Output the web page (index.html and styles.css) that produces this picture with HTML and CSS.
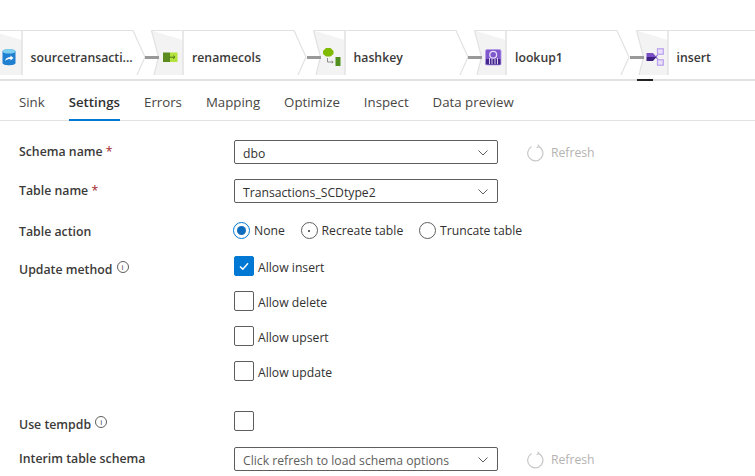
FILE: index.html
```html
<!DOCTYPE html>
<html lang="en">
<head>
    <meta charset="UTF-8">
    <title>Sink settings</title>
    <link rel="stylesheet" href="styles.css">
</head>
<body>

<svg class="defs" width="0" height="0">
    <symbol id="node-shape" viewBox="0 0 161.5 45" overflow="visible">
        <path d="M0.5 0.5 L7.5 27 L3 45 L32 45 L32 0.5 Z" fill="#f3f3f3"/>
        <path d="M0.5 0.5 L143 0.5 L155 27 L147 45" fill="#fff" stroke="#e2e2e2" stroke-width="1.2"/>
        <path d="M0.5 0.5 L7.5 27 L3 45" fill="none" stroke="#e2e2e2" stroke-width="1.2"/>
        <path d="M32 0.5 V45" stroke="#e4e4e4" stroke-width="1.6"/>
    </symbol>
    <symbol id="refresh" viewBox="0 0 18 18">
        <path d="M5.6 2.6 A7.6 7.6 0 1 0 12.6 2.4" fill="none" stroke="#c8c8c8" stroke-width="1.2"/>
        <path d="M11.8 0.8 L12.8 2.6 L10.6 3.8" fill="none" stroke="#c8c8c8" stroke-width="1.2"/>
    </symbol>
    <symbol id="chevron" viewBox="0 0 10 6">
        <path d="M0.5 0.5 L5 5 L9.5 0.5" fill="none" stroke="#605e5c" stroke-width="1"/>
    </symbol>
</svg>

<div class="strip">
    <div class="node">
        <svg class="node-shape"><use href="#node-shape"/></svg>
        <svg class="node-icon" viewBox="0 0 18 18">
            <path d="M2.5 3.5 C2.5 0.5 15.5 0.5 15.5 3.5 V15 C15.5 18 2.5 18 2.5 15 Z" fill="#1f7fd1"/>
            <ellipse cx="9" cy="3.3" rx="6.5" ry="2.3" fill="#7fd0f0"/>
            <path d="M5 13 C5.5 10 8 9 10.5 9 V7.5 L13.5 10 L10.5 12.5 V11 C8.5 11 6.5 11.5 5 13 Z" fill="#fff"/>
        </svg>
        <span class="node-name">sourcetransacti...</span>
    </div>
    <div class="node">
        <svg class="node-shape"><use href="#node-shape"/></svg>
        <i class="link"></i>
        <svg class="node-icon" viewBox="0 0 18 18">
            <rect x="2" y="4.5" width="7" height="9.5" fill="#5b8a1f"/>
            <rect x="9" y="4.5" width="7.5" height="9.5" fill="#b4e33d"/>
            <path d="M8 9.2 H14 M12.2 7.6 L14 9.2 L12.2 10.8" fill="none" stroke="#4d7a1a" stroke-width="1"/>
        </svg>
        <span class="node-name">renamecols</span>
    </div>
    <div class="node">
        <svg class="node-shape"><use href="#node-shape"/></svg>
        <i class="link"></i>
        <svg class="node-icon" viewBox="0 0 18 18">
            <path d="M3 0 H7.5 L10.5 3 V6 L7.5 8.5 H3 L0 6 V3 Z" fill="#7fba00"/>
            <path d="M4.5 10 V14 H10 M8.8 12.8 L10.2 14 L8.8 15.2" fill="none" stroke="#8a8a8a" stroke-width="1"/>
            <rect x="12.5" y="9" width="5" height="9" fill="#4f8f1f"/>
        </svg>
        <span class="node-name">hashkey</span>
    </div>
    <div class="node">
        <svg class="node-shape"><use href="#node-shape"/></svg>
        <i class="link"></i>
        <svg class="node-icon" viewBox="0 0 18 18">
            <rect x="1.5" y="1.5" width="15.5" height="15.5" rx="1.5" fill="#7f58cc"/>
            <rect x="1.5" y="11" width="15.5" height="6" rx="1" fill="#45268c"/>
            <circle cx="9.2" cy="6.8" r="3.4" fill="none" stroke="#e4dbf8" stroke-width="1.3"/>
            <path d="M5.5 16 V10 M8 16 V11 M11 16 V11 M13.5 16 V10" stroke="#d9cdf5" stroke-width="1"/>
            <rect x="1.5" y="1.5" width="15.5" height="15.5" rx="1.5" fill="none" stroke="#b49bea" stroke-width="0.8"/>
        </svg>
        <span class="node-name">lookup1</span>
    </div>
    <div class="node">
        <svg class="node-shape"><use href="#node-shape"/></svg>
        <i class="link"></i>
        <svg class="node-icon" viewBox="0 0 18 18">
            <path d="M10 9 L14 3.5 M10 9 L14 14.5" stroke="#8f6fd8" stroke-width="1.2"/>
            <rect x="11.5" y="0.8" width="5.8" height="5.4" fill="#e9e0fb" stroke="#b99fee" stroke-width="1.2"/>
            <rect x="11.5" y="11.8" width="5.8" height="5.4" fill="#e9e0fb" stroke="#b99fee" stroke-width="1.2"/>
            <path d="M0.5 5 H7 L10.5 9 H0.5 Z" fill="#7a4fc6"/>
            <path d="M0.5 9 H10.5 L7 13 H0.5 Z" fill="#3c1f80"/>
        </svg>
        <span class="node-name">insert</span>
    </div>
</div>

<div class="strip-line"><i class="marker"></i></div>

<div class="tabs">
    <span class="tab">Sink</span>
    <span class="tab active">Settings</span>
    <span class="tab">Errors</span>
    <span class="tab">Mapping</span>
    <span class="tab">Optimize</span>
    <span class="tab">Inspect</span>
    <span class="tab">Data preview</span>
</div>

<div class="form">
    <div class="row">
        <div class="label">Schema name <span class="req">*</span></div>
        <div class="control">
            <div class="select"><span>dbo</span><svg class="chev"><use href="#chevron"/></svg></div>
            <div class="refresh"><svg><use href="#refresh"/></svg><span>Refresh</span></div>
        </div>
    </div>
    <div class="row">
        <div class="label">Table name <span class="req">*</span></div>
        <div class="control">
            <div class="select"><span>Transactions_SCDtype2</span><svg class="chev"><use href="#chevron"/></svg></div>
        </div>
    </div>
    <div class="row row-radios">
        <div class="label">Table action</div>
        <div class="control radios">
            <label class="radio"><i class="dot checked"></i>None</label>
            <label class="radio"><i class="dot hover"></i>Recreate table</label>
            <label class="radio"><i class="dot"></i>Truncate table</label>
        </div>
    </div>
    <div class="row row-checks">
        <div class="label label-low">Update method <span class="info">i</span></div>
        <div class="checks">
            <label class="check"><i class="box checked"><svg viewBox="0 0 20 20"><path d="M5.5 10.5 L8.7 13.5 L14.5 7" fill="none" stroke="#fff" stroke-width="1.6"/></svg></i>Allow insert</label>
            <label class="check"><i class="box"></i>Allow delete</label>
            <label class="check"><i class="box"></i>Allow upsert</label>
            <label class="check"><i class="box"></i>Allow update</label>
        </div>
    </div>
    <div class="row row-tempdb">
        <div class="label label-low">Use tempdb <span class="info">i</span></div>
        <div class="control"><i class="box"></i></div>
    </div>
    <div class="row">
        <div class="label">Interim table schema</div>
        <div class="control">
            <div class="select placeholder"><span>Click refresh to load schema options</span><svg class="chev"><use href="#chevron"/></svg></div>
            <div class="refresh"><svg><use href="#refresh"/></svg><span>Refresh</span></div>
        </div>
    </div>
</div>

</body>
</html>
```

FILE: styles.css
```css
html, body {
    height: 100%;
    overflow: hidden;
}

body {
    margin: 0;
    padding: 30px 0 0 0;
    box-sizing: border-box;
    background: #fff;
    color: #323130;
    font-family: "Open Sans", "Noto Sans", sans-serif;
    font-size: 12.2px;
}

.defs {
    position: absolute;
}

/* pipeline strip */
.strip {
    display: flex;
    height: 45px;
    margin-left: -10.5px;
    overflow: hidden;
}

.node {
    position: relative;
    flex: 0 0 161.5px;
    display: flex;
    align-items: center;
    box-sizing: border-box;
    height: 45px;
    padding: 9px 0 0 10px;
}

.node-shape {
    position: absolute;
    left: 0;
    top: 0;
    width: 161.5px;
    height: 45px;
    overflow: visible;
}

.link {
    position: absolute;
    left: -6px;
    top: 26px;
    width: 14px;
    height: 3px;
    background: #999;
}

.node-icon {
    position: relative;
    width: 18px;
    height: 18px;
    flex: none;
}

.node-name {
    position: relative;
    margin-left: 2px;
    padding-left: 11px;
    font-size: 12.25px;
    font-weight: 600;
    white-space: nowrap;
    color: #3b3a39;
}

.strip-line {
    position: relative;
    height: 2px;
    margin-top: 4px;
    background: #e1e1e1;
}

.marker {
    position: absolute;
    left: 637px;
    top: 0;
    width: 16px;
    height: 2px;
    background: #222;
}

/* tabs */
.tabs {
    display: flex;
    gap: 24px;
    height: 40px;
    padding-left: 19px;
    border-bottom: 1px solid #e1e1e1;
    box-sizing: border-box;
    font-size: 13.25px;
}

.tab {
    padding-top: 12px;
    height: 40px;
    box-sizing: border-box;
    color: #484644;
}

.tab.active {
    font-weight: 600;
    color: #323130;
    border-bottom: 2px solid #0078d4;
}

/* form */
.form {
    padding: 19px 0 0 19px;
}

.row {
    display: flex;
    min-height: 24px;
    margin-bottom: 15px;
}

.row-radios {
    height: 19px;
    min-height: 19px;
    margin-top: 18px;
    margin-bottom: 16px;
}

.row-checks {
    margin-bottom: 30px;
}

.row-tempdb {
    height: 20px;
    min-height: 20px;
    margin-bottom: 16px;
}

.label {
    flex: 0 0 215px;
    padding-top: 3px;
    font-size: 12.3px;
    font-weight: 600;
    color: #3b3a39;
}

.row-radios .label {
    padding-top: 2px;
}

.label-low {
    padding-top: 5px;
}

.req {
    color: #a4262c;
    font-weight: 400;
}

.info {
    display: inline-block;
    width: 10px;
    height: 10px;
    margin-left: 1px;
    border: 1px solid #605e5c;
    border-radius: 50%;
    font-size: 8px;
    font-weight: 400;
    line-height: 10px;
    text-align: center;
    vertical-align: 4px;
}

.control {
    display: flex;
    align-items: center;
}

.select {
    display: flex;
    align-items: center;
    justify-content: space-between;
    box-sizing: border-box;
    width: 264px;
    height: 24px;
    padding: 2px 8px 0 8px;
    border: 1px solid #605e5c;
    border-radius: 2px;
    background: #fff;
}

.placeholder {
    color: #605e5c;
}

.chev {
    width: 10px;
    height: 6px;
    margin-right: 1px;
}

.refresh {
    display: flex;
    align-items: center;
    gap: 7px;
    margin-left: 28px;
    padding-top: 1px;
    color: #b5b3b1;
}

.refresh svg {
    width: 18px;
    height: 18px;
}

/* radios and checkboxes */
.radios {
    gap: 15.75px;
    margin-left: -1px;
}

.radio {
    display: flex;
    align-items: center;
    gap: 4px;
}

.dot {
    position: relative;
    display: block;
    box-sizing: border-box;
    width: 17px;
    height: 17px;
    border: 1px solid #605e5c;
    border-radius: 50%;
}

.dot.checked {
    border-color: #0078d4;
}

.dot.checked::after,
.dot.hover::after {
    content: "";
    position: absolute;
    border-radius: 50%;
}

.dot.checked::after {
    inset: 3px;
    background: #0f6cbd;
}

.dot.hover::after {
    inset: 6.5px;
    background: #323130;
}

.checks {
    display: flex;
    flex-direction: column;
    gap: 15px;
}

.check {
    display: flex;
    align-items: flex-start;
    gap: 4px;
    height: 20px;
    line-height: 24px;
}

.box {
    display: block;
    box-sizing: border-box;
    width: 20px;
    height: 20px;
    border: 1px solid #605e5c;
    border-radius: 2px;
}

.box.checked {
    background: #0078d4;
    border-color: #0078d4;
}

.box svg {
    display: block;
    width: 18px;
    height: 18px;
}
```
